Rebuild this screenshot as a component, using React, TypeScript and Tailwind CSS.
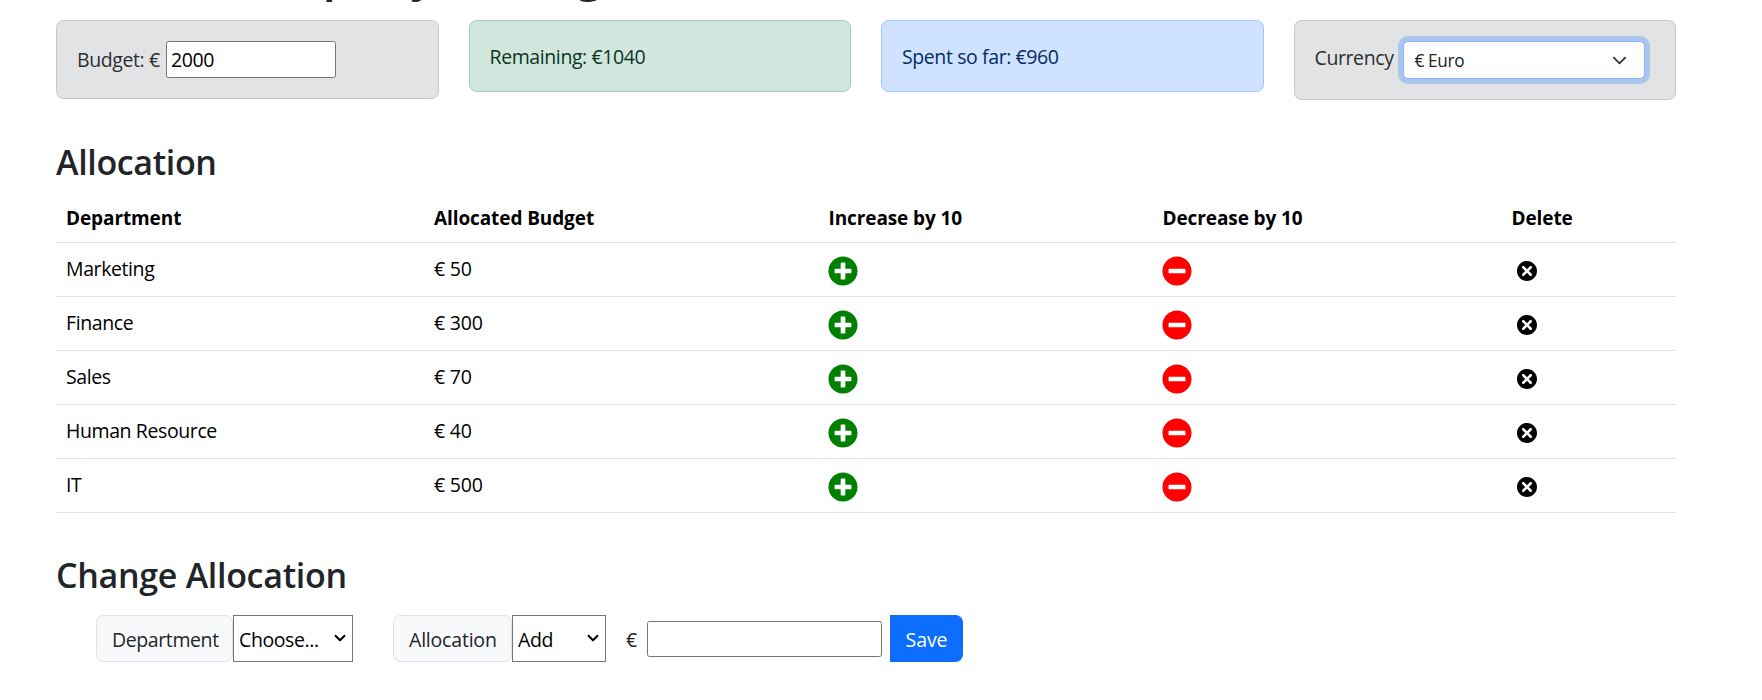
import { FaMinusCircle, FaPlusCircle } from 'react-icons/fa';
import { TiDelete } from 'react-icons/ti';

const departments = [
  { name: 'Marketing', budget: 50 },
  { name: 'Finance', budget: 300 },
  { name: 'Sales', budget: 70 },
  { name: 'Human Resource', budget: 40 },
  { name: 'IT', budget: 500 },
];

function Chevron({ className, width = 2 }: { className: string; width?: number }) {
  return (
    <svg viewBox="0 0 16 16" className={className} fill="none" stroke="currentColor" strokeWidth={width} strokeLinecap="round" strokeLinejoin="round">
      <path d="m2 5 6 6 6-6" />
    </svg>
  );
}

function SummaryCards() {
  return (
    <div className="grid grid-cols-4 items-start gap-[30px]">
      <div className="flex h-[79px] items-center rounded-[7.5px] border border-[#c4c8cb] bg-[#e2e3e5] pl-5 text-[#2b2f32]">
        <span className="w-[89px] whitespace-nowrap">Budget: €</span>
        <input className="h-[37px] w-[170px] rounded-[2.5px] border border-[#767676] bg-white px-1 text-black" defaultValue="2000" />
      </div>
      <div className="flex h-[72px] items-center rounded-[7.5px] border border-[#a3cfbb] bg-[#d1e7dd] pt-0.5 pl-5 text-[#0a3622]">
        Remaining: €1040
      </div>
      <div className="flex h-[72px] items-center rounded-[7.5px] border border-[#9ec5fe] bg-[#cfe2ff] pt-0.5 pl-5 text-[#052c65]">
        Spent so far: €960
      </div>
      <div className="flex h-20 items-start rounded-[7.5px] border border-[#c4c8cb] bg-[#e2e3e5] pt-5 pl-5 text-[#2b2f32]">
        <span className="w-[88px] leading-[33px]">Currency</span>
        <div className="flex h-[38px] w-[242px] items-center justify-between rounded-[5px] border border-[#86b7fe] bg-white pr-[17px] pl-[11px] text-[17.3px] text-[#212529] shadow-[0_0_0_5px_#abc5ec]">
          <span className="pt-0.5">€ Euro</span>
          <Chevron className="size-[15px] text-[#343a40]" />
        </div>
      </div>
    </div>
  );
}

function AllocationTable() {
  return (
    <table className="w-full table-fixed border-collapse text-left text-black">
      <colgroup>
        <col className="w-[368px]" />
        <col className="w-[394.5px]" />
        <col className="w-[334px]" />
        <col className="w-[349px]" />
        <col />
      </colgroup>
      <thead>
        <tr className="h-12 border-b border-[#dee2e6] text-[19px] font-bold tracking-[-0.1px]">
          <th className="px-2.5">Department</th>
          <th className="px-2.5">Allocated Budget</th>
          <th className="px-2.5">Increase by 10</th>
          <th className="px-2.5">Decrease by 10</th>
          <th className="px-2.5">Delete</th>
        </tr>
      </thead>
      <tbody>
        {departments.map((d) => (
          <tr key={d.name} className="h-[54px] border-b border-[#dee2e6]">
            <td className="px-2.5">{d.name}</td>
            <td className="px-2.5 tracking-[-0.2px]">€ {d.budget}</td>
            <td className="pt-1 pl-[9.5px]"><FaPlusCircle className="size-[30px] text-[#008000]" /></td>
            <td className="pt-1 pl-[9.5px]"><FaMinusCircle className="size-[30px] text-[#ff0000]" /></td>
            <td className="px-2.5 pt-1"><TiDelete className="size-[30px]" /></td>
          </tr>
        ))}
      </tbody>
    </table>
  );
}

function ChangeForm() {
  return (
    <div className="flex h-[47px] items-stretch pl-10">
      <label className="flex w-[137px] items-center rounded-[7.5px] border border-[#dee2e6] bg-[#f8f9fa] pt-1 pl-[15px]">Department</label>
      <div className="flex w-[120px] items-center justify-between border border-[#767676] bg-white pr-1.5 pl-[5px] text-black">
        <span className="pt-1">Choose...</span>
        <Chevron className="size-3" width={2.6} />
      </div>
      <label className="ml-10 flex w-[119px] items-center rounded-[7.5px] border border-[#dee2e6] bg-[#f8f9fa] pt-1 pl-[15px] tracking-[-0.2px]">Allocation</label>
      <div className="flex w-[94px] items-center justify-between border border-[#767676] bg-white pr-1.5 pl-[5px] text-black">
        <span className="pt-1">Add</span>
        <Chevron className="size-3" width={2.6} />
      </div>
      <span className="ml-5 flex w-[21px] items-center pt-1">€</span>
      <input className="mt-1.5 h-9 w-[235px] rounded-[2.5px] border border-[#767676] bg-white px-1" />
      <button className="ml-2 flex w-[73px] items-center justify-center rounded-r-[7.5px] bg-[#0d6efd] pt-1 tracking-[-0.1px] text-white">Save</button>
    </div>
  );
}

export default function App() {
  return (
    <main className="h-[700px] overflow-hidden bg-white px-14 pr-[86px] font-['Open_Sans',sans-serif] text-[19.5px] leading-[30px] tracking-[-0.4px] text-[#212529]">
      <h1 className="-mt-[58px] h-[78px] pl-[161px] text-[48px] leading-[60px] font-semibold tracking-normal whitespace-nowrap">Company's Budget Allocation</h1>
      <SummaryCards />
      <h2 className="mt-[41px] h-[43px] text-[34px] leading-[42px] font-semibold tracking-[-0.35px]">Allocation</h2>
      <div className="mt-2.5">
        <AllocationTable />
      </div>
      <h2 className="mt-[41px] mb-[19px] text-[34px] leading-[42px] font-semibold tracking-[-0.3px]">Change Allocation</h2>
      <ChangeForm />
    </main>
  );
}
